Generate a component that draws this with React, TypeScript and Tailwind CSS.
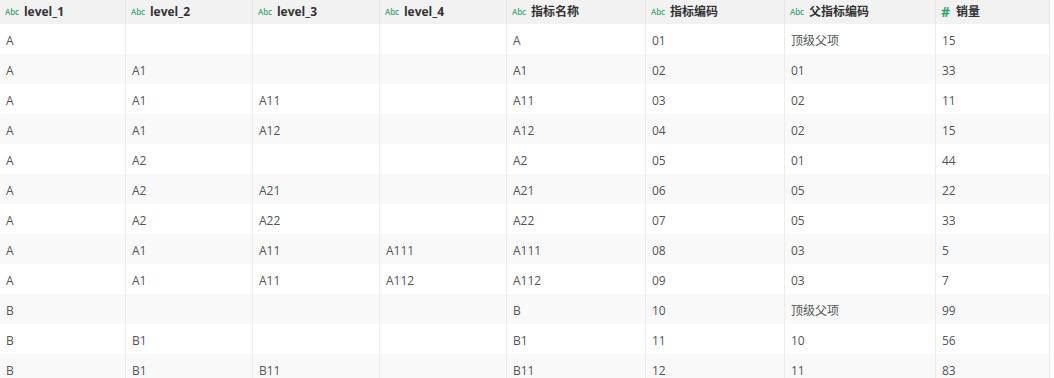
import React from "react";

const cols = [
  { name: "level_1", type: "abc" },
  { name: "level_2", type: "abc" },
  { name: "level_3", type: "abc" },
  { name: "level_4", type: "abc" },
  { name: "指标名称", type: "abc" },
  { name: "指标编码", type: "abc" },
  { name: "父指标编码", type: "abc" },
  { name: "销量", type: "num" },
];

const rows: string[][] = [
  ["A", "", "", "", "A", "01", "顶级父项", "15"],
  ["A", "A1", "", "", "A1", "02", "01", "33"],
  ["A", "A1", "A11", "", "A11", "03", "02", "11"],
  ["A", "A1", "A12", "", "A12", "04", "02", "15"],
  ["A", "A2", "", "", "A2", "05", "01", "44"],
  ["A", "A2", "A21", "", "A21", "06", "05", "22"],
  ["A", "A2", "A22", "", "A22", "07", "05", "33"],
  ["A", "A1", "A11", "A111", "A111", "08", "03", "5"],
  ["A", "A1", "A11", "A112", "A112", "09", "03", "7"],
  ["B", "", "", "", "B", "10", "顶级父项", "99"],
  ["B", "B1", "", "", "B1", "11", "10", "56"],
  ["B", "B1", "B11", "", "B11", "12", "11", "83"],
];

const font = { fontFamily: '"Open Sans", "Noto Sans CJK SC", sans-serif' };

function TypeIcon({ type }: { type: string }) {
  if (type === "num")
    return <span className="text-[14px] font-bold leading-none text-[#2aa56a] mr-[6px]">#</span>;
  return (
    <span className="text-[8px] leading-none font-semibold text-[#3aa870] mr-[5px] tracking-[-0.1px]">Abc</span>
  );
}

export default function App() {
  return (
    <div className="w-[1054px] h-[378px] overflow-hidden bg-white" style={font}>
      <div className="grid grid-cols-[126px_127px_127px_127px_139px_139px_151px_114px]">
        {cols.map((c, i) => (
          <div
            key={i}
            className="h-[24px] bg-[#f2f2f2] border-r border-[#e6e6e6] flex items-center pl-[5px] text-[12px] font-bold text-[#333]"
          >
            <TypeIcon type={c.type} />
            <span>{c.name}</span>
          </div>
        ))}
        {rows.map((r, ri) =>
          r.map((v, ci) => (
            <div
              key={`${ri}-${ci}`}
              className={`h-[30px] border-r border-[#ececec] flex items-center pl-[6px] pt-[4px] text-[12px] text-[#555] ${
                ri % 2 === 1 ? "bg-[#f9f9f9]" : "bg-white"
              }`}
            >
              {v}
            </div>
          ))
        )}
      </div>
    </div>
  );
}
